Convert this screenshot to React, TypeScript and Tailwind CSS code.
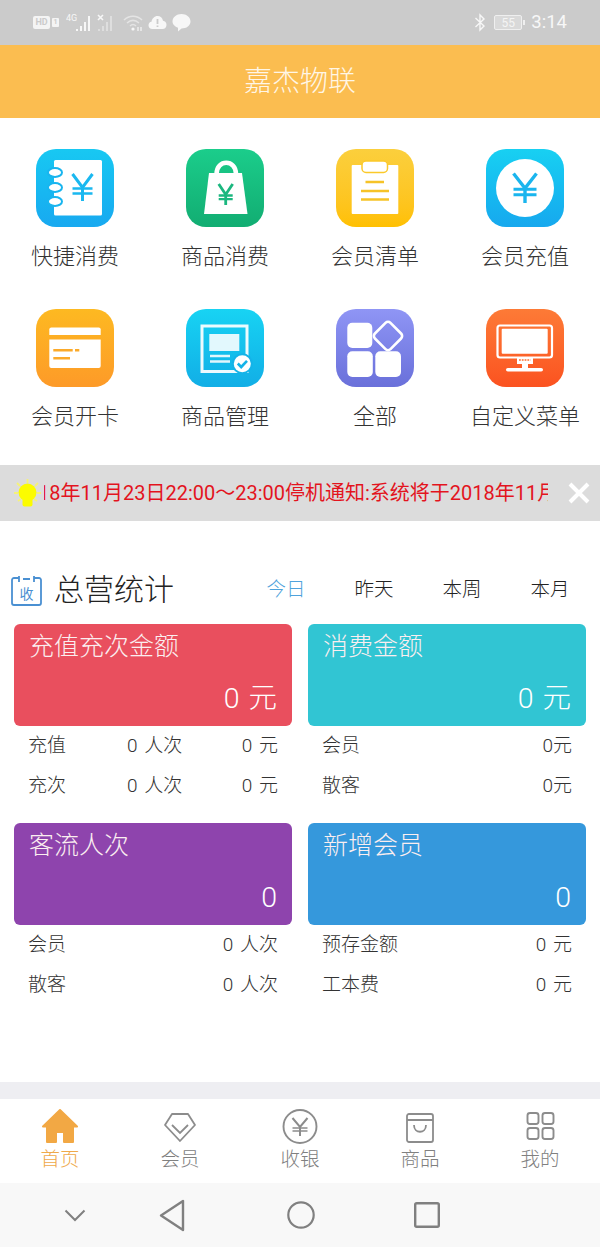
import React from 'react';

const fontStack = "font-['Roboto','Noto_Sans_CJK_SC',sans-serif]";

interface YenProps {
  x: number;
  top: number;
  bottom: number;
  arm: number;
  color: string;
  width?: number;
}

// yen sign drawn with plain strokes so it can sit inside the app icons
const Yen: React.FC<YenProps> = ({ x, top, bottom, arm, color, width = 3 }) => {
  const mid = top + (bottom - top) * 0.5;
  return (
    <g stroke={color} strokeWidth={width} fill="none">
      <path d={`M${x - arm} ${top}L${x} ${mid}L${x + arm} ${top}`} />
      <path d={`M${x} ${mid}V${bottom}`} />
      <path d={`M${x - arm} ${mid + 1}H${x + arm}M${x - arm} ${mid + (bottom - top) * 0.22}H${x + arm}`} strokeWidth={width - 0.5} />
    </g>
  );
};

const NotebookGlyph = () => (
  <>
    <rect x="18" y="11" width="48" height="55.5" rx="1.5" fill="#fff" />
    {[23.5, 38.5, 52.5].map((cy) => (
      <ellipse key={cy} cx="19" cy={cy} rx="7" ry="4.5" fill="#fff" stroke="#18b5ef" strokeWidth="2" />
    ))}
    <Yen x={46.5} top={25} bottom={52} arm={10} color="#1ab8f0" />
  </>
);

const BagGlyph = () => (
  <>
    <path d="M30.5 25C30.5 10 50 10 50 25" fill="none" stroke="#fff" strokeWidth="4.5" />
    <path d="M23 24H56L61.5 65H18Z" fill="#fff" strokeLinejoin="round" />
    <Yen x={39.7} top={35} bottom={56} arm={7} color="#1bb77f" width={2.8} />
  </>
);

const ClipboardGlyph = () => (
  <>
    <rect x="15.7" y="16" width="46.6" height="49" rx="1" fill="#fff" />
    <rect x="26" y="12" width="25.5" height="11.5" rx="4" fill="#fff" stroke="#fbc92a" strokeWidth="1.5" />
    <path d="M29.5 33H48M25 42H53M25 50.5H53" stroke="#f6c327" strokeWidth="2.4" />
  </>
);

const CoinGlyph = () => (
  <>
    <circle cx="39" cy="39" r="29" fill="#fff" />
    <Yen x={39} top={24.5} bottom={54} arm={11.5} color="#1ab5ee" width={3.4} />
  </>
);

const CardGlyph = () => (
  <>
    <path d="M13.3 20.5a2 2 0 0 1 2-2h47.4a2 2 0 0 1 2 2V26H13.3Z" fill="#fff" />
    <path d="M13.3 30.5H64.7V57a2 2 0 0 1-2 2H15.3a2 2 0 0 1-2-2Z" fill="#fff" />
    <path d="M17.3 41.3H36.7M39 41.3H43.3M17.3 49.3H34" stroke="#fbaa2a" strokeWidth="2.4" />
  </>
);

const ManageGlyph = () => (
  <>
    <rect x="16" y="17" width="45" height="45.5" fill="none" stroke="#fff" strokeWidth="3" opacity="0.92" />
    <rect x="23.3" y="25" width="30" height="17" fill="#fff" opacity="0.88" />
    <path d="M24 47H44M24 52.5H44" stroke="#fff" strokeWidth="2.6" opacity="0.88" />
    <circle cx="56.3" cy="54.7" r="10.5" fill="#14b3e8" />
    <circle cx="56.3" cy="54.7" r="8.5" fill="#fff" />
    <path d="M51.8 54.5L55.2 58L61 51.8" fill="none" stroke="#14b3e8" strokeWidth="2.6" />
  </>
);

const AllGlyph = () => (
  <>
    <rect x="11.3" y="13.7" width="25" height="25.3" rx="5" fill="#fff" />
    <rect x="11.3" y="42.3" width="25.5" height="25.7" rx="5" fill="#fff" />
    <rect x="39.3" y="42.3" width="25.7" height="25.7" rx="5" fill="#fff" />
    <rect x="41" y="16" width="22" height="22" rx="3.5" fill="none" stroke="#fff" strokeWidth="2.6" transform="rotate(45 52 27)" />
  </>
);

const MonitorGlyph = () => (
  <>
    <rect x="11.5" y="16.5" width="54.5" height="32" rx="2.5" fill="none" stroke="#fff" strokeWidth="2.2" />
    <rect x="15.7" y="19.7" width="46" height="25" rx="1" fill="#fff" />
    <path d="M31 48.7H47V55H42V59H36V55H31Z" fill="#fff" />
    <path d="M33 51H44.5" stroke="#fc6d2d" strokeWidth="1.6" strokeDasharray="1.8 1" />
    <rect x="20" y="59" width="37" height="3.6" rx="1.8" fill="#fff" />
  </>
);

interface MenuItem {
  label: string;
  tile: string;
  glyph: React.ReactNode;
}

const menuItems: MenuItem[] = [
  { label: '快捷消费', tile: 'from-[#18c8f2] to-[#18a9f0]', glyph: <NotebookGlyph /> },
  { label: '商品消费', tile: 'from-[#1bcd8b] to-[#12ad72]', glyph: <BagGlyph /> },
  { label: '会员清单', tile: 'from-[#fbcf3c] to-[#ffc000]', glyph: <ClipboardGlyph /> },
  { label: '会员充值', tile: 'from-[#18d0f2] to-[#17a8ee]', glyph: <CoinGlyph /> },
  { label: '会员开卡', tile: 'from-[#fdb921] to-[#fd9a28]', glyph: <CardGlyph /> },
  { label: '商品管理', tile: 'from-[#18d3f3] to-[#12aee6]', glyph: <ManageGlyph /> },
  { label: '全部', tile: 'from-[#8f95f5] to-[#6a70da]', glyph: <AllGlyph /> },
  { label: '自定义菜单', tile: 'from-[#fd7a36] to-[#fb5220]', glyph: <MonitorGlyph /> },
];

interface StatRow {
  label: string;
  middle?: string;
  value: string;
}

interface StatCard {
  title: string;
  amount: string;
  color: string;
  rows: StatRow[];
}

const statCards: StatCard[] = [
  {
    title: '充值充次金额',
    amount: '0 元',
    color: 'bg-[#e94f5e]',
    rows: [
      { label: '充值', middle: '0 人次', value: '0 元' },
      { label: '充次', middle: '0 人次', value: '0 元' },
    ],
  },
  {
    title: '消费金额',
    amount: '0 元',
    color: 'bg-[#31c5d3]',
    rows: [
      { label: '会员', value: '0元' },
      { label: '散客', value: '0元' },
    ],
  },
  {
    title: '客流人次',
    amount: '0',
    color: 'bg-[#8e44ad]',
    rows: [
      { label: '会员', value: '0 人次' },
      { label: '散客', value: '0 人次' },
    ],
  },
  {
    title: '新增会员',
    amount: '0',
    color: 'bg-[#3598dc]',
    rows: [
      { label: '预存金额', value: '0 元' },
      { label: '工本费', value: '0 元' },
    ],
  },
];

const StatusBar = () => (
  <div className="flex h-[45px] items-center justify-between bg-[#cbcbcb] pl-[33px] pr-[33px] text-[#f7f7f7]">
    <div className="flex items-center">
      <span className="flex h-[13px] w-[17px] items-center justify-center rounded-[2px] bg-[#f4f4f4] text-[9px] font-bold leading-none text-[#cbcbcb]">
        HD
      </span>
      <span className="ml-[2px] flex h-[9px] w-[7px] items-center justify-center rounded-[1px] bg-[#f4f4f4] text-[7px] font-bold leading-none text-[#cbcbcb]">
        1
      </span>
      <svg className="ml-[7px]" width="26" height="20" viewBox="0 0 26 20">
        <text x="0" y="8" fontSize="9" fill="#f7f7f7" fontFamily="Roboto">4G</text>
        <path d="M11 18v-2M15 18v-5M19 18V9M23 18V3" stroke="#f7f7f7" strokeWidth="2" />
      </svg>
      <svg className="ml-[5px]" width="20" height="20" viewBox="0 0 20 20">
        <path d="M1 2L6 7M6 2L1 7" stroke="#f7f7f7" strokeWidth="1.6" />
        <path d="M2 18v-2M6 18v-5M10 18V9M14 18V3" stroke="#dedede" strokeWidth="2" />
      </svg>
      <svg className="ml-[6px]" width="22" height="18" viewBox="0 0 22 18">
        <path d="M1 6C6 1 14 1 19 6M4 9C8 5.5 12 5.5 16 9M7 12C9 10 11 10 13 12" fill="none" stroke="#e4e4e4" strokeWidth="1.5" />
        <circle cx="10" cy="15" r="1.6" fill="#f7f7f7" />
        <path d="M15 13v4M18 13v4" stroke="#f7f7f7" strokeWidth="1.2" />
      </svg>
      <svg className="ml-[3px]" width="19" height="15" viewBox="0 0 19 15">
        <path d="M4.5 14C2 14 0.5 12.3 0.5 10.2C0.5 8.3 1.8 6.9 3.5 6.7C4 3.5 6.5 1 9.5 1C12.3 1 14.5 3 15 5.8C17 6 18.5 7.7 18.5 9.9C18.5 12.2 16.8 14 14.5 14Z" fill="#f7f7f7" />
        <path d="M9.5 4V9M9.5 10.5V12" stroke="#cbcbcb" strokeWidth="1.8" />
      </svg>
      <svg className="ml-[5px]" width="19" height="19" viewBox="0 0 19 19">
        <path d="M9.5 1C14.5 1 18.5 4.3 18.5 8.5C18.5 12.7 14.5 15.5 9.5 15.5L6 18.5V14.8C3 13.7 0.5 11.5 0.5 8.5C0.5 4.3 4.5 1 9.5 1Z" fill="#f7f7f7" />
      </svg>
    </div>
    <div className="flex items-center">
      <svg width="12" height="19" viewBox="0 0 12 19">
        <path d="M1.5 5L10 13L6 17V2L10 6L1.5 14" fill="none" stroke="#f7f7f7" strokeWidth="1.4" />
      </svg>
      <span className="ml-[8px] flex h-[15px] w-[28px] items-center justify-center rounded-[2px] border border-[#efefef] bg-[#d9d9d9] text-[12px] leading-none text-[#f4f4f4]">
        55
      </span>
      <span className="ml-[1px] h-[5px] w-[2px] bg-[#efefef]" />
      <span className="ml-[6px] text-[18.5px] leading-none">3:14</span>
    </div>
  </div>
);

const MenuGrid = () => (
  <div className="grid grid-cols-4 gap-y-[37px] pb-[33px] pt-[31px]">
    {menuItems.map((item) => (
      <div key={item.label} className="flex flex-col items-center">
        <div className={`size-[78px] rounded-[20px] bg-gradient-to-b ${item.tile}`}>
          <svg width="78" height="78" viewBox="0 0 78 78">
            {item.glyph}
          </svg>
        </div>
        <span className="mt-[16px] h-[29px] whitespace-nowrap text-[22px] font-light leading-[28px] text-[#333]">
          {item.label}
        </span>
      </div>
    ))}
  </div>
);

// the ticker is caught mid-scroll, so its text starts left of the clipping box
const NoticeBar = () => (
  <div className="flex h-[56px] items-center bg-[#dcdcdc]">
    <svg className="ml-[13px] shrink-0" width="29" height="30" viewBox="0 0 29 30">
      <path d="M14.5 1V5M4 5L7 8M25 5L22 8M1 15H5M28 15H24M5 23L8 21M24 23L21 21" stroke="#f5f27a" strokeWidth="1.8" />
      <circle cx="14.5" cy="14.5" r="9" fill="#fcfc00" />
      <rect x="9.5" y="20" width="10" height="8.5" rx="2" fill="#fcfc00" />
    </svg>
    <div className="ml-[2px] w-[504px] shrink-0 overflow-hidden">
      <p className="ml-[-28.5px] whitespace-nowrap text-[20px] leading-[28px] text-[#e3141e]">
        2018年11月23日22:00～23:00停机通知:系统将于2018年11月23日
      </p>
    </div>
    <svg className="ml-[20px] shrink-0" width="22" height="22" viewBox="0 0 22 22">
      <path d="M2 2L20 20M20 2L2 20" stroke="#fff" strokeWidth="4" />
    </svg>
  </div>
);

const tabs = ['今日', '昨天', '本周', '本月'];

const SectionHeader = () => (
  <div className="flex h-[46px] items-center pl-[11px]">
    <svg width="31" height="31" viewBox="0 0 31 31">
      <path d="M8 3H3a2 2 0 0 0-2 2v23a2 2 0 0 0 2 2h25a2 2 0 0 0 2-2V5a2 2 0 0 0-2-2h-5" fill="none" stroke="#4a90d2" strokeWidth="1.8" />
      <path d="M8 1v6M23 1v6M12 4h7" stroke="#4a90d2" strokeWidth="1.8" />
      <text x="15.5" y="24" fontSize="14" textAnchor="middle" fill="#4a90d2" fontFamily="Noto Sans CJK SC">收</text>
    </svg>
    <h2 className="ml-[12px] text-[30px] font-light leading-none text-[#222]">总营统计</h2>
    <div className="ml-[68px] grid grid-cols-[88px_88px_88px_88px] text-center text-[19.5px] font-light leading-none">
      {tabs.map((tab, i) => (
        <span key={tab} className={i === 0 ? 'text-[#4fa3dc]' : 'text-[#222]'}>
          {tab}
        </span>
      ))}
    </div>
  </div>
);

const StatBlock: React.FC<{ card: StatCard }> = ({ card }) => (
  <div>
    <div className={`flex h-[102px] flex-col justify-between rounded-[6px] px-[15px] pb-[10px] pt-[7px] text-white ${card.color}`}>
      <span className="text-[25px] font-light leading-[32px] text-[#fbeef0]">{card.title}</span>
      <span className="self-end text-[28.5px] font-light leading-[34px] [word-spacing:2px]">{card.amount}</span>
    </div>
    {card.rows.map((row) => (
      <div key={row.label} className="flex h-[40px] items-center px-[14px] pb-[2px] text-[19px] font-light leading-none text-[#333] [word-spacing:2px]">
        <span className={row.middle ? 'w-[99px] shrink-0' : 'grow'}>{row.label}</span>
        {row.middle && <span className="grow">{row.middle}</span>}
        <span className="whitespace-nowrap">{row.value}</span>
      </div>
    ))}
  </div>
);

const BottomTabs = () => (
  <div className="grid h-[84px] grid-cols-5 bg-white">
    {[
      {
        label: '首页',
        active: true,
        icon: (
          <path
            d="M18 1L35 17.5H31V33H22V23H14V33H5V17.5H1Z"
            fill="#f2a844"
            stroke="#f2a844"
            strokeWidth="2"
            strokeLinejoin="round"
          />
        ),
      },
      {
        label: '会员',
        icon: (
          <>
            <path d="M10 5H26L33 16L18 32L3 16Z" fill="none" stroke="#8c8c8c" strokeWidth="1.8" strokeLinejoin="round" />
            <path d="M10 16L18 24L26 16" fill="none" stroke="#8c8c8c" strokeWidth="1.8" />
          </>
        ),
      },
      {
        label: '收银',
        icon: (
          <>
            <circle cx="18" cy="17.5" r="16.5" fill="none" stroke="#8c8c8c" strokeWidth="1.9" />
            <Yen x={18} top={9} bottom={27} arm={7.5} color="#8c8c8c" width={2} />
          </>
        ),
      },
      {
        label: '商品',
        icon: (
          <>
            <rect x="5" y="5" width="26" height="28" rx="2" fill="none" stroke="#8c8c8c" strokeWidth="1.8" />
            <path d="M5 11H31M12 16C12 25 24 25 24 16" fill="none" stroke="#8c8c8c" strokeWidth="1.8" />
          </>
        ),
      },
      {
        label: '我的',
        icon: (
          <>
            <rect x="5.5" y="4" width="11" height="11" rx="2.5" fill="none" stroke="#8c8c8c" strokeWidth="1.9" />
            <rect x="20.5" y="4" width="11" height="11" rx="2.5" fill="none" stroke="#8c8c8c" strokeWidth="1.9" />
            <rect x="5.5" y="19" width="11" height="11" rx="2.5" fill="none" stroke="#8c8c8c" strokeWidth="1.9" />
            <rect x="20.5" y="19" width="11" height="11" rx="2.5" fill="none" stroke="#8c8c8c" strokeWidth="1.9" />
          </>
        ),
      },
    ].map((tab) => (
      <div key={tab.label} className="flex flex-col items-center pt-[10px]">
        <svg width="36" height="35" viewBox="0 0 36 35">
          {tab.icon}
        </svg>
        <span className={`mt-[3px] text-[19.5px] font-light leading-[26px] ${tab.active ? 'text-[#efa94a]' : 'text-[#808080]'}`}>
          {tab.label}
        </span>
      </div>
    ))}
  </div>
);

const NavBar = () => (
  <div className="flex h-[64px] items-center bg-[#f8f8f8] pl-[64px]">
    <svg width="22" height="13" viewBox="0 0 22 13">
      <path d="M1.5 1.5L11 11L20.5 1.5" fill="none" stroke="#808080" strokeWidth="2" />
    </svg>
    <svg className="ml-[73px]" width="26" height="33" viewBox="0 0 26 33">
      <path d="M24 2V31L2 16.5Z" fill="none" stroke="#808080" strokeWidth="2.4" strokeLinejoin="round" />
    </svg>
    <svg className="ml-[102px]" width="28" height="28" viewBox="0 0 28 28">
      <circle cx="14" cy="14" r="12.7" fill="none" stroke="#808080" strokeWidth="2.2" />
    </svg>
    <svg className="ml-[99px]" width="26" height="26" viewBox="0 0 26 26">
      <rect x="1.2" y="1.2" width="23.6" height="23.6" rx="1.5" fill="none" stroke="#808080" strokeWidth="2.4" />
    </svg>
  </div>
);

export default function App() {
  return (
    <div className={`flex h-[1247px] w-[600px] flex-col overflow-hidden bg-white ${fontStack}`}>
      <StatusBar />
      <header className="flex h-[73px] items-center justify-center bg-[#fbbd50] text-[28px] font-light text-[#fff6e6]">
        嘉杰物联
      </header>
      <MenuGrid />
      <NoticeBar />
      <div className="mt-[46px]">
        <SectionHeader />
      </div>
      <div className="mt-[11px] grid grid-cols-2 gap-x-[16px] gap-y-[17px] px-[14px]">
        {statCards.map((card) => (
          <StatBlock key={card.title} card={card} />
        ))}
      </div>
      <div className="mt-auto h-[17px] bg-[#eeeef2]" />
      <BottomTabs />
      <NavBar />
    </div>
  );
}
